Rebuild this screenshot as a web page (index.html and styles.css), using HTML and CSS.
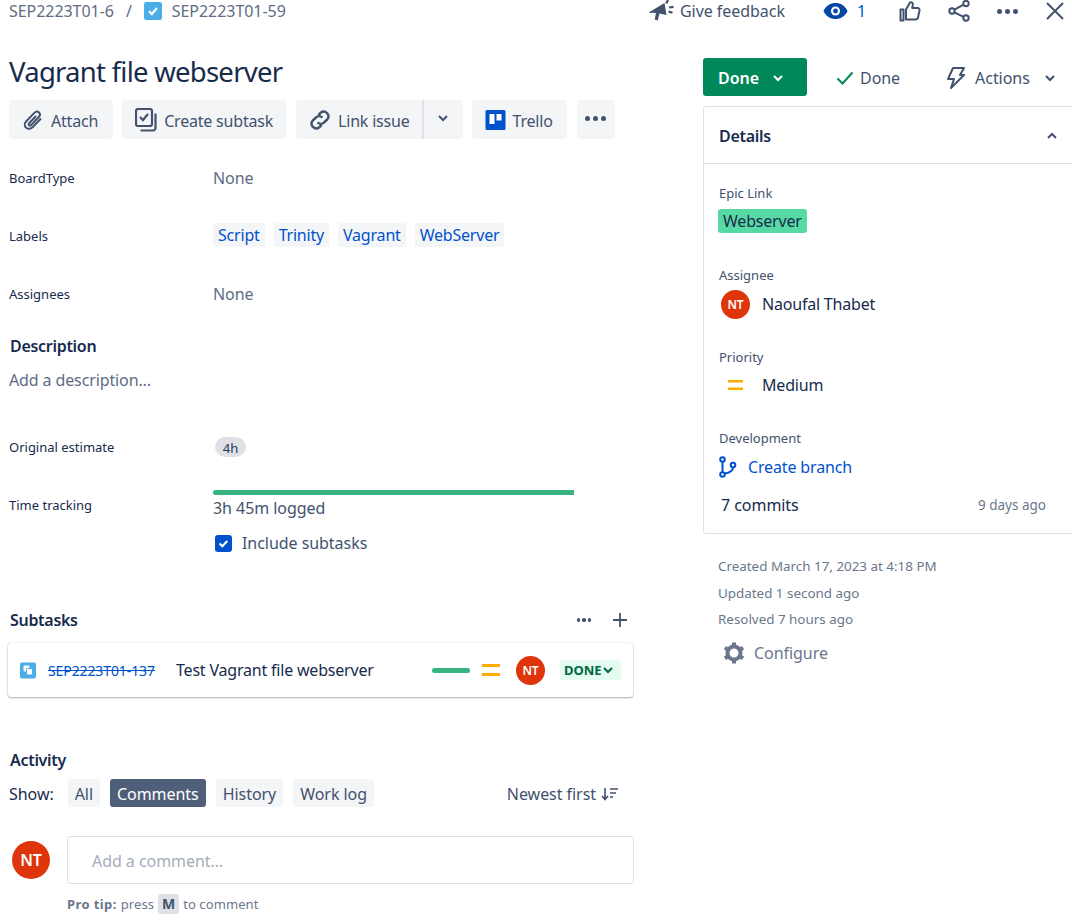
FILE: index.html
```html
<!DOCTYPE html>
<html lang="en">
<head>
    <meta charset="UTF-8">
    <meta name="viewport" content="width=device-width, initial-scale=1.0">
    <title>Vagrant file webserver</title>
    <link rel="stylesheet" href="styles.css">
</head>
<body>
    <header class="topbar">
        <nav class="crumbs">
            <span>SEP2223T01-6</span>
            <span class="crumb-sep">/</span>
            <svg class="crumb-icon" width="18" height="18" viewBox="0 0 16 16"><rect width="16" height="16" rx="2" fill="#4bade8"/><path d="M4.5 8.2l2.5 2.5 4.5-5.4" fill="none" stroke="#fff" stroke-width="2"/></svg>
            <span>SEP2223T01-59</span>
        </nav>
        <div class="top-actions">
            <span class="feedback">
                <svg width="25" height="22" viewBox="0 0 25 22"><path d="M.5 12L15.500 3l2 12-7-1.500-1.800 7-3-1 1.300-6.500-4.500-.3C.8 13.500 0 13 .5 12z" fill="#42526e"/><path d="M19 0l-1.800 3.500M20 7.500l4.500-.7M19.500 11.500l4 1.200" stroke="#42526e" stroke-width="2.200" fill="none"/></svg>
                Give feedback
            </span>
            <span class="watch">
                <svg width="25" height="18" viewBox="0 0 25 18"><path d="M.5 9C3 3.500 7.500 1 12.500 1s9.500 2.500 12 8c-2.500 5.500-7 8-12 8S3 14.500.5 9z" fill="#0747a6"/><circle cx="12.500" cy="9" r="4.500" fill="#fff"/><circle cx="12.500" cy="9" r="2.400" fill="#0747a6"/></svg>
                1
            </span>
            <svg class="thumb" width="22" height="22" viewBox="0 0 22 22"><path d="M7 9.500l4-7c2-.8 3.200.6 2.800 2.500l-.6 3h5.300c1.500 0 2.300 1.200 2 2.500l-1.500 7c-.3 1.300-1.200 2-2.500 2H7zM1.500 9.500h3v11h-3z" fill="none" stroke="#42526e" stroke-width="2" stroke-linejoin="round"/></svg>
            <svg class="share" width="22" height="22" viewBox="0 0 22 22"><g fill="none" stroke="#42526e" stroke-width="2"><circle cx="4" cy="11" r="2.700"/><circle cx="18" cy="3.500" r="2.700"/><circle cx="18" cy="18" r="2.700"/><path d="M6.400 9.700l9.200-5M6.400 12.300l9.200 4.500"/></g></svg>
            <span class="dots top-dots"><i></i><i></i><i></i></span>
            <svg class="close" width="18" height="18" viewBox="0 0 18 18"><path d="M1 1l16 16M17 1L1 17" stroke="#42526e" stroke-width="2" fill="none"/></svg>
        </div>
    </header>

    <div class="columns">
        <main class="main">
            <h1>Vagrant file webserver</h1>
            <div class="toolbar">
                <button class="btn btn-attach">
                    <svg width="22" height="24" viewBox="0 0 22 24"><path d="M19 10.500l-8.500 8.800c-2 2-4.800 2-6.500.3s-1.600-4.500.3-6.400l8.300-8.600c1.300-1.300 3.200-1.300 4.400-.1s1.200 3 0 4.300l-8 8.300c-.6.600-1.500.6-2 .1s-.5-1.400.1-2l7-7.200" fill="none" stroke="#42526e" stroke-width="2"/></svg>
                    Attach
                </button>
                <button class="btn btn-subtask">
                    <svg width="22" height="24" viewBox="1 1 22 24"><g fill="none" stroke="#42526e" stroke-width="2.200"><rect x="2" y="2" width="16" height="17" rx="2"/><path d="M6 10l3 3 5-6"/><path d="M21.500 6.500V21a2.500 2.500 0 0 1-2.500 2.500H6.500"/></g></svg>
                    Create subtask
                </button>
                <div class="btn-split">
                    <button class="btn btn-left">
                        <svg width="22" height="22" viewBox="2 2 20 20"><g fill="none" stroke="#42526e" stroke-width="2.200"><path d="M10.500 7.500l2.300-2.300a4.300 4.300 0 0 1 6 6l-3 3a4.300 4.300 0 0 1-6 0"/><path d="M13.500 16.500l-2.300 2.300a4.300 4.300 0 0 1-6-6l3-3a4.300 4.300 0 0 1 6 0"/></g></svg>
                        Link issue
                    </button>
                    <button class="btn btn-right"><svg class="chev" width="10" height="7" viewBox="0 0 10 7"><path d="M1 1l4 4 4-4" fill="none" stroke="#42526e" stroke-width="2"/></svg></button>
                </div>
                <button class="btn">
                    <svg width="21" height="24" viewBox="0 0 20 24"><rect y="2" width="20" height="20" rx="1.500" fill="#0052cc"/><rect x="4" y="6" width="5" height="10" rx=".6" fill="#fff"/><rect x="11" y="6" width="5" height="6.500" rx=".6" fill="#fff"/></svg>
                    Trello
                </button>
                <button class="btn btn-more"><span class="dots"><i></i><i></i><i></i></span></button>
            </div>

            <div class="field">
                <div class="field-label">BoardType</div>
                <div class="field-none">None</div>
            </div>
            <div class="field">
                <div class="field-label">Labels</div>
                <div class="labels">
                    <a class="label">Script</a>
                    <a class="label">Trinity</a>
                    <a class="label">Vagrant</a>
                    <a class="label">WebServer</a>
                </div>
            </div>
            <div class="field">
                <div class="field-label">Assignees</div>
                <div class="field-none">None</div>
            </div>

            <h2 class="section-title desc-title">Description</h2>
            <p class="desc-empty">Add a description...</p>

            <div class="field estimate">
                <div class="field-label">Original estimate</div>
                <div><span class="pill">4h</span></div>
            </div>
            <div class="tracking">
                <div class="field-label tracking-label">Time tracking</div>
                <div class="tracking-body">
                    <div class="bar"></div>
                    <div class="logged">3h 45m logged</div>
                    <label class="check">
                        <svg width="17" height="17" viewBox="0 0 17 17"><rect width="17" height="17" rx="3" fill="#0052cc"/><path d="M4.500 8.500l2.800 2.800 5-5.300" fill="none" stroke="#fff" stroke-width="2"/></svg>
                        Include subtasks
                    </label>
                </div>
            </div>

            <div class="subtasks-head">
                <h2 class="section-title">Subtasks</h2>
                <div class="subtasks-tools">
                    <span class="dots small-dots"><i></i><i></i><i></i></span>
                    <svg width="14" height="14" viewBox="0 0 14 14"><path d="M7 0v14M0 7h14" stroke="#42526e" stroke-width="1.800"/></svg>
                </div>
            </div>
            <div class="subtask-card">
                <svg class="subtask-icon" width="16" height="17" viewBox="0 0 16 17"><rect y=".5" width="16" height="16" rx="2" fill="#4bade8"/><rect x="3.500" y="3.500" width="6" height="6" rx="1" fill="#fff"/><rect x="6.500" y="6.500" width="6" height="6.500" rx="1" fill="#fff" stroke="#4bade8"/></svg>
                <a class="subtask-key">SEP2223T01-137</a>
                <span class="subtask-name">Test Vagrant file webserver</span>
                <span class="subtask-bar"></span>
                <svg class="priority" width="18" height="14" viewBox="0 0 18 14"><path d="M0 2.500h18M0 11.500h18" stroke="#ffab00" stroke-width="3"/></svg>
                <span class="avatar avatar-small">NT</span>
                <span class="lozenge">DONE <svg width="10" height="7" viewBox="0 0 10 7"><path d="M1 1l4 4 4-4" fill="none" stroke="#006644" stroke-width="2"/></svg></span>
            </div>

            <h2 class="section-title activity-title">Activity</h2>
            <div class="activity-bar">
                <span class="show">Show:</span>
                <button class="tab">All</button>
                <button class="tab tab-active">Comments</button>
                <button class="tab">History</button>
                <button class="tab">Work log</button>
                <span class="sort">
                    Newest first
                    <svg width="18" height="14" viewBox="0 0 18 14"><path d="M4 1v11M1 9l3 3.500L7 9M9 2h8M9 6h6M9 10h3" fill="none" stroke="#42526e" stroke-width="1.600"/></svg>
                </span>
            </div>
            <div class="comment">
                <span class="avatar avatar-large">NT</span>
                <div class="comment-box">Add a comment...</div>
            </div>
            <p class="protip"><b>Pro tip:</b> press <kbd>M</kbd> to comment</p>
        </main>

        <aside class="side">
            <div class="status-row">
                <button class="status-btn">Done <svg width="10" height="7" viewBox="0 0 10 7"><path d="M1 1l4 4 4-4" fill="none" stroke="#fff" stroke-width="2"/></svg></button>
                <span class="status-done">
                    <svg width="18" height="14" viewBox="0 0 18 14"><path d="M1.500 7.500l5 5 10-11" fill="none" stroke="#00875a" stroke-width="2"/></svg>
                    Done
                </span>
                <span class="status-actions">
                    <svg width="20" height="24" viewBox="0 0 20 24"><path d="M7 2h11l-4 7h4L5 22l3-9H2z" fill="none" stroke="#42526e" stroke-width="2" stroke-linejoin="round"/></svg>
                    Actions
                    <svg class="actions-chev" width="10" height="7" viewBox="0 0 10 7"><path d="M1 1l4 4 4-4" fill="none" stroke="#42526e" stroke-width="2"/></svg>
                </span>
            </div>

            <section class="details">
                <div class="details-head">
                    <h2 class="section-title">Details</h2>
                    <svg width="10" height="7" viewBox="0 0 10 7"><path d="M1 6l4-4 4 4" fill="none" stroke="#42526e" stroke-width="2"/></svg>
                </div>
                <div class="details-body">
                    <div class="side-label">Epic Link</div>
                    <span class="epic">Webserver</span>

                    <div class="side-label assignee-label">Assignee</div>
                    <div class="side-value">
                        <span class="avatar avatar-small">NT</span>
                        Naoufal Thabet
                    </div>

                    <div class="side-label priority-label">Priority</div>
                    <div class="side-value priority-value">
                        <svg width="15" height="10" viewBox="0 0 15 10"><path d="M0 1.250h15M0 8.750h15" stroke="#ffab00" stroke-width="2.500"/></svg>
                        Medium
                    </div>

                    <div class="side-label dev-label">Development</div>
                    <a class="branch">
                        <svg width="18" height="22" viewBox="0 0 18 22"><g fill="none" stroke="#0052cc" stroke-width="2"><circle cx="3.500" cy="3.500" r="2.300"/><circle cx="3.500" cy="18.500" r="2.300"/><circle cx="14" cy="9" r="2.300"/><path d="M3.500 6v10M14 11.500c0 3.500-3 5-8 6"/></g></svg>
                        Create branch
                    </a>
                    <div class="commits">
                        <span>7 commits</span>
                        <span class="commits-age">9 days ago</span>
                    </div>
                </div>
            </section>

            <div class="dates">
                <div>Created March 17, 2023 at 4:18 PM</div>
                <div>Updated 1 second ago</div>
                <div>Resolved 7 hours ago</div>
            </div>
            <div class="configure">
                <svg width="24" height="24" viewBox="0 0 24 24"><circle cx="12" cy="12" r="6.500" fill="none" stroke="#6b778c" stroke-width="4"/><path d="M12 1.500v4M12 18.500v4M2.900 6.700l3.500 2M17.600 15.300l3.500 2M2.900 17.300l3.500-2M17.600 8.700l3.500-2" stroke="#6b778c" stroke-width="4"/></svg>
                Configure
            </div>
        </aside>
    </div>
</body>
</html>
```

FILE: styles.css
```css
* {
    box-sizing: border-box;
}
html, body {
    overflow: hidden;
}
body {
    margin: 0;
    height: 920px;
    background-color: #fff;
    color: #172b4d;
    font-family: "Noto Sans", "Open Sans", Arial, sans-serif;
    font-size: 16px;
    letter-spacing: -0.05px;
}
svg {
    flex: none;
    display: block;
}
button {
    font: inherit;
    letter-spacing: inherit;
    border: none;
    cursor: pointer;
}
h1, h2, p {
    margin: 0;
}

/* top bar */
.topbar {
    display: flex;
    justify-content: space-between;
    align-items: center;
    height: 22px;
    padding: 0 8px 0 9px;
    color: #5e6c84;
}
.crumbs {
    display: flex;
    align-items: center;
}
.crumb-sep {
    margin: 0 12px;
}
.crumb-icon {
    margin-right: 10px;
}
.top-actions {
    display: flex;
    align-items: center;
}
.feedback {
    display: flex;
    align-items: center;
    gap: 6px;
    margin-right: 38px;
    color: #42526e;
}
.watch {
    display: flex;
    align-items: center;
    gap: 9px;
    margin-right: 33px;
    color: #0052cc;
}
.thumb {
    margin-right: 27px;
}
.share {
    margin-right: 27px;
}
.top-dots {
    margin-right: 28px;
}
.dots {
    display: inline-flex;
    gap: 3px;
}
.dots i {
    width: 5px;
    height: 5px;
    border-radius: 50%;
    background-color: #42526e;
}
.small-dots {
    gap: 2px;
}
.small-dots i {
    width: 3.5px;
    height: 3.5px;
}

.columns {
    display: flex;
}

/* left column */
.main {
    width: 703px;
    padding: 32px 69px 0 9px;
}
h1 {
    font-size: 27.5px;
    font-weight: 400;
    line-height: 36px;
    letter-spacing: -0.75px;
}
.toolbar {
    display: flex;
    gap: 9px;
    margin-top: 10px;
    margin-bottom: 10px;
}
.btn {
    display: flex;
    align-items: center;
    gap: 7px;
    height: 39px;
    padding: 2px 14px 0 13px;
    border-radius: 4px;
    background-color: #f4f5f7;
    color: #42526e;
    letter-spacing: -0.2px;
}
.btn svg, .btn .dots {
    margin-top: -2px;
}
.btn-attach {
    padding-right: 15px;
}
.btn-subtask {
    padding-right: 13px;
}
.btn-split {
    display: flex;
    margin-left: 1px;
}
.btn-left {
    padding-right: 12px;
    border-radius: 4px 0 0 4px;
    border-right: 2px solid #dfe1e6;
}
.btn-right {
    width: 39px;
    padding: 0;
    justify-content: center;
    border-radius: 0 4px 4px 0;
}
.btn-more {
    width: 38px;
    margin-left: 1px;
    padding: 0;
    justify-content: center;
}
.field {
    display: flex;
    align-items: center;
    height: 58px;
}
.field-label {
    width: 204px;
    flex: none;
    font-size: 13px;
    letter-spacing: 0;
}
.field-none {
    color: #5e6c84;
}
.labels {
    display: flex;
    gap: 9px;
    margin-top: -2px;
    letter-spacing: -0.2px;
}
.label {
    padding: 0 5px;
    line-height: 24px;
    border-radius: 3px;
    background-color: #f4f5f7;
    color: #0052cc;
}
.section-title {
    font-size: 16px;
    font-weight: 600;
    line-height: 22px;
    letter-spacing: -0.3px;
}
.main .section-title {
    padding-left: 1px;
}
.desc-title {
    margin-top: 12px;
}
.desc-empty {
    margin-top: 12px;
    line-height: 22px;
    letter-spacing: -0.12px;
    color: #5e6c84;
}
.estimate {
    margin-top: 27px;
}
.pill {
    display: block;
    width: 31px;
    height: 20px;
    margin-left: 2px;
    border-radius: 10px;
    background-color: #dfe1e6;
    color: #253858;
    font-size: 13px;
    line-height: 22px;
    text-align: center;
}
.tracking {
    display: flex;
}
.tracking-label {
    margin-top: 19px;
    line-height: 20px;
}
.tracking-body {
    flex: 1;
}
.bar {
    width: 361px;
    height: 5px;
    margin-top: 14px;
    border-radius: 3px 0 0 3px;
    background-color: #36b37e;
}
.logged {
    margin-top: 2px;
    line-height: 22px;
    color: #42526e;
}
.check {
    display: flex;
    align-items: center;
    gap: 10px;
    margin: 13px 0 0 2px;
    line-height: 22px;
    color: #42526e;
}
.subtasks-head {
    display: flex;
    justify-content: space-between;
    align-items: center;
    margin-top: 55px;
}
.subtasks-tools {
    display: flex;
    align-items: center;
    gap: 22px;
    margin-right: 7px;
}
.subtask-card {
    display: flex;
    align-items: center;
    height: 54px;
    margin: 12px 1px 0 -1px;
    padding: 0 12px;
    border-radius: 3px;
    background-color: #fff;
    box-shadow: 0 1px 2px rgba(9, 30, 66, 0.35), 0 0 1px rgba(9, 30, 66, 0.3);
}
.subtask-icon {
    margin-right: 12px;
}
.subtask-key {
    width: 128px;
    flex: none;
    font-size: 14px;
    letter-spacing: -0.1px;
    color: #0052cc;
    text-decoration: line-through;
}
.subtask-name {
    flex: 1;
    letter-spacing: -0.2px;
}
.subtask-bar {
    width: 38px;
    height: 5px;
    margin-right: 12px;
    border-radius: 3px;
    background-color: #36b37e;
}
.priority {
    margin-right: 16px;
}
.avatar {
    display: flex;
    align-items: center;
    justify-content: center;
    flex: none;
    border-radius: 50%;
    background-color: #de350b;
    color: #fff;
    font-weight: 600;
}
.avatar-small {
    width: 29px;
    height: 29px;
    font-size: 12px;
}
.subtask-card .avatar-small {
    margin-right: 15px;
}
.avatar-large {
    width: 38px;
    height: 38px;
    margin: 5px 17px 0 3px;
    font-size: 16px;
}
.lozenge {
    display: flex;
    align-items: center;
    gap: 2px;
    width: 61px;
    height: 20px;
    padding: 0 4px;
    border-radius: 3px;
    background-color: #e3fcef;
    color: #006644;
    font-size: 13px;
    font-weight: 700;
}
.activity-title {
    margin-top: 52px;
}
.activity-bar {
    display: flex;
    align-items: center;
    gap: 10px;
    margin-top: 8px;
}
.show {
    margin-right: 4px;
    padding-top: 2px;
}
.tab {
    height: 28px;
    padding: 2px 7px 0;
    border-radius: 3px;
    background-color: #f4f5f7;
    color: #42526e;
}
.tab-active {
    background-color: #505f79;
    color: #fff;
}
.sort {
    display: flex;
    align-items: center;
    gap: 5px;
    margin-left: auto;
    margin-right: 15px;
    padding-top: 2px;
    color: #42526e;
}
.comment {
    display: flex;
    align-items: flex-start;
    margin-top: 29px;
}
.comment-box {
    flex: 1;
    height: 48px;
    padding-left: 24px;
    border: 1px solid #dfe1e6;
    border-radius: 3px;
    color: #a5adba;
    line-height: 48px;
}
.protip {
    display: flex;
    align-items: center;
    gap: 4px;
    margin: 10px 0 0 58px;
    font-size: 13px;
    letter-spacing: 0.1px;
    color: #6b778c;
}
.protip b {
    letter-spacing: 0.4px;
}
kbd {
    display: block;
    width: 21px;
    height: 20px;
    border-radius: 3px;
    background-color: #dfe1e6;
    color: #42526e;
    font-family: inherit;
    font-size: 14px;
    font-weight: 700;
    line-height: 20px;
    text-align: center;
}

/* right column */
.side {
    width: 369px;
    flex: none;
}
.status-row {
    display: flex;
    align-items: center;
    height: 38px;
    margin-top: 36px;
}
.status-btn {
    display: flex;
    align-items: center;
    gap: 14px;
    height: 38px;
    width: 104px;
    padding: 2px 0 0 15px;
    border-radius: 3px;
    background-color: #00875a;
    color: #fff;
    font-weight: 600;
}
.status-done {
    display: flex;
    align-items: center;
    gap: 6px;
    margin-left: 29px;
    padding-top: 2px;
    color: #42526e;
}
.status-actions {
    display: flex;
    align-items: center;
    gap: 9px;
    margin-left: 46px;
    padding-top: 2px;
    color: #42526e;
}
.actions-chev {
    margin-left: 6px;
}
.details {
    margin-top: 10px;
    border: 1px solid #dfe1e6;
    border-right: none;
    border-radius: 3px 0 0 3px;
}
.details-head {
    display: flex;
    justify-content: space-between;
    align-items: center;
    height: 57px;
    padding: 1px 15px 0;
    border-bottom: 1px solid #dfe1e6;
}
.details-body {
    height: 369px;
    padding: 20px 15px 0;
}
.side-label {
    font-size: 13px;
    line-height: 18px;
    letter-spacing: 0;
    color: #42526e;
}
.epic {
    display: inline-block;
    margin: 7px 0 0 -1px;
    padding: 0 5px;
    border-radius: 3px;
    background-color: #57d9a3;
    color: #172b4d;
    line-height: 24px;
    letter-spacing: -0.2px;
}
.assignee-label {
    margin-top: 33px;
}
.side-value {
    display: flex;
    align-items: center;
    gap: 12px;
    height: 30px;
    margin: 5px 0 0 2px;
    letter-spacing: -0.2px;
}
.priority-label {
    margin-top: 29px;
}
.priority-value {
    gap: 19px;
    margin: 4px 0 0 9px;
}
.dev-label {
    margin-top: 29px;
}
.branch {
    display: flex;
    align-items: center;
    gap: 11px;
    margin-top: 9px;
    letter-spacing: -0.15px;
    color: #0052cc;
}
.commits {
    display: flex;
    justify-content: space-between;
    align-items: center;
    margin: 16px 11px 0 2px;
}
.commits-age {
    font-size: 13.5px;
    letter-spacing: 0;
    color: #6b778c;
}
.dates {
    margin: 19px 0 0 15px;
    font-size: 13.4px;
    line-height: 26.5px;
    letter-spacing: 0;
    color: #6b778c;
}
.configure {
    display: flex;
    align-items: center;
    gap: 8px;
    margin: 8px 0 0 19px;
    color: #6b778c;
}
```
